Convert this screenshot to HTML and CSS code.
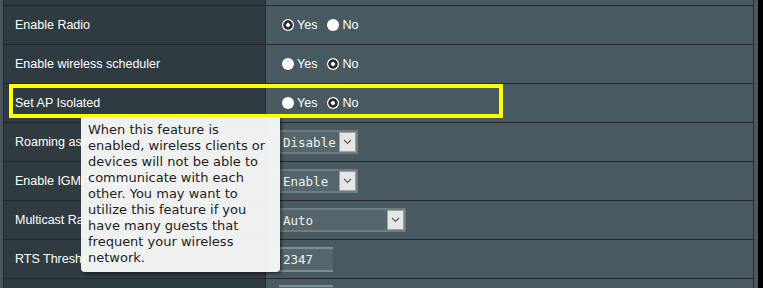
FILE: index.html
```html
<!DOCTYPE html>
<html>
<head>
<meta charset="utf-8">
<link rel="stylesheet" href="styles.css">
</head>
<body>
<div class="page">
  <div class="strip-left"></div>
  <div class="table">
    <div class="row"><div class="label"></div><div class="value"></div></div>
    <div class="row">
      <div class="label">Enable Radio</div>
      <div class="value">
        <span class="radio checked"></span><span class="opt">Yes</span>
        <span class="radio"></span><span class="opt">No</span>
      </div>
    </div>
    <div class="row">
      <div class="label">Enable wireless scheduler</div>
      <div class="value">
        <span class="radio"></span><span class="opt">Yes</span>
        <span class="radio checked"></span><span class="opt">No</span>
      </div>
    </div>
    <div class="row">
      <div class="label">Set AP Isolated</div>
      <div class="value">
        <span class="radio"></span><span class="opt">Yes</span>
        <span class="radio checked"></span><span class="opt">No</span>
      </div>
    </div>
    <div class="row">
      <div class="label">Roaming assistant</div>
      <div class="value pad-sel">
        <div class="select sel-short"><span class="sel-text">Disable</span><span class="sel-btn"><svg width="9" height="6" viewBox="0 0 9 6"><polyline points="1,1 4.5,4.5 8,1" fill="none" stroke="#555" stroke-width="1.1"/></svg></span></div>
      </div>
    </div>
    <div class="row">
      <div class="label">Enable IGMP Snooping</div>
      <div class="value pad-sel">
        <div class="select sel-short"><span class="sel-text">Enable</span><span class="sel-btn"><svg width="9" height="6" viewBox="0 0 9 6"><polyline points="1,1 4.5,4.5 8,1" fill="none" stroke="#555" stroke-width="1.1"/></svg></span></div>
      </div>
    </div>
    <div class="row">
      <div class="label">Multicast Rate(Mbps)</div>
      <div class="value pad-sel">
        <div class="select sel-long"><span class="sel-text">Auto</span><span class="sel-btn"><svg width="9" height="6" viewBox="0 0 9 6"><polyline points="1,1 4.5,4.5 8,1" fill="none" stroke="#555" stroke-width="1.1"/></svg></span></div>
      </div>
    </div>
    <div class="row">
      <div class="label">RTS Threshold</div>
      <div class="value pad-sel">
        <div class="input">2347</div>
      </div>
    </div>
    <div class="row">
      <div class="label"></div>
      <div class="value pad-sel pad-top">
        <div class="input"></div>
      </div>
    </div>
  </div>
  <div class="strip-right"></div>
  <div class="strip-black"></div>

  <div class="highlight"></div>
  <div class="tooltip">When this feature is<br>enabled, wireless clients or<br>devices will not be able to<br>communicate with each<br>other. You may want to<br>utilize this feature if you<br>have many guests that<br>frequent your wireless<br>network.</div>
</div>
</body>
</html>
```

FILE: styles.css
```css
html, body {
  margin: 0;
  padding: 0;
  width: 763px;
  height: 288px;
  overflow: hidden;
  background: #000;
}

.page {
  position: relative;
  display: flex;
  width: 763px;
  height: 288px;
  overflow: hidden;
  font-family: "Liberation Sans", Arial, sans-serif;
  font-size: 12.5px;
}

.strip-left {
  width: 3px;
  flex: none;
  background: #4b565a;
}

.table {
  width: 749px;
  flex: none;
  margin-top: -33px;
  border-left: 1px solid #23292c;
  border-right: 1px solid #23292c;
  align-self: flex-start;
}

.strip-right {
  width: 4px;
  flex: none;
  background: #4f5659;
}

.strip-black {
  flex: 1;
  background: #000;
}

.row {
  display: grid;
  grid-template-columns: 262px 1fr;
  height: 39px;
  box-sizing: border-box;
  border-bottom: 1px solid #25292b;
}

.label {
  background: #2f3b40;
  border-right: 1px solid #25292b;
  color: #fff;
  padding-left: 11px;
  display: flex;
  align-items: center;
  white-space: nowrap;
}

.value {
  background: #485a60;
  color: #fff;
  display: flex;
  align-items: center;
  padding-left: 16px;
}

.pad-sel {
  padding-left: 13px;
}

.pad-top {
  align-items: flex-start;
  padding-top: 6px;
}

.radio {
  width: 12px;
  height: 12px;
  border-radius: 50%;
  background: #fff;
  flex: none;
  box-sizing: border-box;
}

.radio.checked {
  background: radial-gradient(circle, #fff 0 1.6px, #2e2e2e 2.2px 4.4px, #fff 5px);
}

.opt {
  margin-left: 3px;
  margin-right: 10px;
}

.select {
  display: flex;
  height: 24px;
  box-sizing: border-box;
  border: 2px solid #6f7c81;
  background: #55666c;
  align-items: stretch;
}

.sel-short {
  width: 79px;
}

.sel-long {
  width: 127px;
}

.sel-text {
  flex: 1;
  padding-left: 2px;
  display: flex;
  align-items: center;
  font-family: "DejaVu Sans Mono", monospace;
  font-size: 12.5px;
  color: #f0f0f0;
}

.sel-btn {
  width: 17px;
  flex: none;
  background: #e6e6e6;
  border: 1px solid #a0a0a0;
  box-sizing: border-box;
  display: flex;
  align-items: center;
  justify-content: center;
}

.input {
  width: 54px;
  height: 25px;
  box-sizing: border-box;
  background: #55666c;
  border-top: 2px solid #7f8c91;
  border-bottom: 2px solid #7f8c91;
  padding-left: 4px;
  display: flex;
  align-items: center;
  font-family: "DejaVu Sans Mono", monospace;
  font-size: 12.5px;
  color: #f0f0f0;
}

.highlight {
  position: absolute;
  left: 9px;
  top: 84px;
  width: 494px;
  height: 34px;
  box-sizing: border-box;
  border: 4px solid #ffff00;
}

.tooltip {
  position: absolute;
  left: 81px;
  top: 117px;
  width: 199px;
  height: 155px;
  box-sizing: border-box;
  padding: 5px 7px;
  background: rgba(250, 250, 250, 0.95);
  border-radius: 0 0 4px 4px;
  box-shadow: 2px 2px 3px rgba(0, 0, 0, 0.45);
  font-family: "DejaVu Sans", Verdana, sans-serif;
  font-size: 13px;
  line-height: 16px;
  color: #1e1e1e;
  white-space: nowrap;
}
```
